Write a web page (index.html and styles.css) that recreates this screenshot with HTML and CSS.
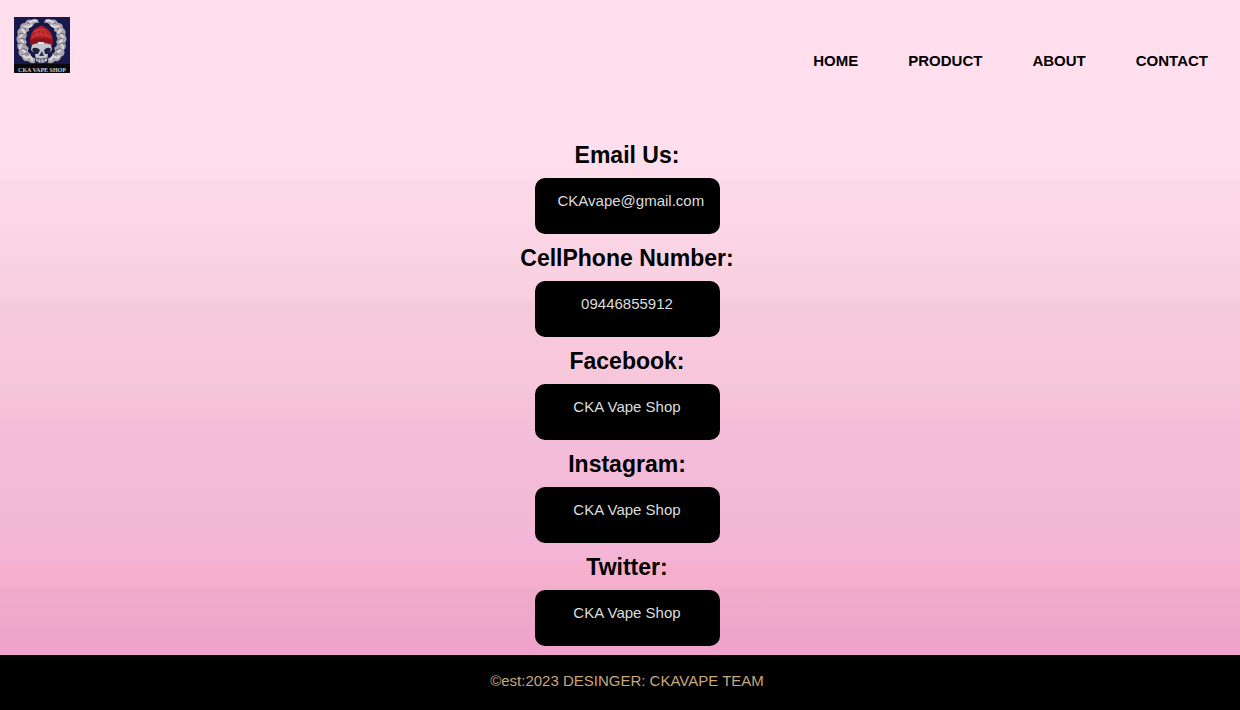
FILE: index.html
```html
<!DOCTYPE html>
<html lang="en">
<head>
<meta charset="utf-8">
<title>CKA Vape Shop - Contact</title>
<link rel="stylesheet" href="styles.css">
</head>
<body>
<header class="header">
  <a class="logo" href="#" aria-label="CKA Vape Shop">
    <svg viewBox="0 0 56 56" width="56" height="56">
      <defs>
        <g id="smoke">
          <path d="M24 3Q21 1 18 3Q13 1 11 6Q6 6 6 11Q2 14 4 18Q1 22 4 26Q2 30 5 33Q3 38 8 40Q9 45 14 44Q18 48 22 45L21 41Q16 41 17 37Q12 35 15 31Q10 28 13 25Q10 22 13 19Q11 15 15 14Q14 9 19 9Q20 5 25 6Z" fill="#aaa5ad"/>
          <path d="M23 4Q17 2 15 7Q20 8 15 10Q9 8 8 13Q13 15 8 18Q5 20 7 23Q11 25 7 28Q5 31 8 33Q13 34 9 38Q12 43 15 39Q19 41 18 44" fill="none" stroke="#dfd9d9" stroke-width="2"/>
          <path d="M13 6Q17 6 16 8M7 11Q10 10 12 12M5 17Q8 15 11 18M5 22Q9 20 11 23M4 27Q8 25 11 28M6 33Q9 30 13 33M8 38Q11 35 15 38" fill="none" stroke="#6d687c"/>
        </g>
      </defs>
      <rect width="56" height="56" fill="#17194e"/>
      <use href="#smoke"/>
      <use href="#smoke" transform="translate(55 0) scale(-1 1)"/>
      <path d="M16 26L20 23H36L39 26L38 34L34 39V45H21V39L17 34Z" fill="#15183a"/>
      <path d="M18 27Q27 23 37 27L38 33L34 37L33 44Q27 48 22 44L21 37L17 33Z" fill="#c3c4cf"/>
      <path d="M18 32Q22 29 26 33L24 37H20ZM30 33Q34 29 37 32L35 37H31Z" fill="#20233e"/>
      <path d="M28 34L25 39H30Z" fill="#343449"/>
      <path d="M21 41Q27 43 34 41M24 41V45M27 42V46M30 41V45" stroke="#555568" fill="none"/>
      <path d="M16 26Q16 12 25 10Q27 7 30 10Q39 13 39 27L38 28Q27 24 17 28Z" fill="#b51f26"/>
      <path d="M18 20Q27 15 37 20M20 15Q25 11 31 13M22 18L24 15M27 17V14M32 17L31 14" fill="none" stroke="#d04c45"/>
      <path d="M16 23Q27 19 39 23V27Q27 23 17 28Z" fill="#86151e"/>
      <rect x="24" y="25" width="6" height="2" fill="#d9e0ec"/>
      <rect y="47" width="56" height="9" fill="#07070c"/>
      <text class="logo-text" x="28" y="55" text-anchor="middle">CKA VAPE SHOP</text>
    </svg>
  </a>
  <nav class="nav">
    <a href="#">HOME</a>
    <a href="#">PRODUCT</a>
    <a href="#">ABOUT</a>
    <a href="#">CONTACT</a>
  </nav>
</header>
<main class="contacts">
  <h2 class="label">Email Us:</h2>
  <p class="card">CKAvape@gmail.com</p>
  <h2 class="label">CellPhone Number:</h2>
  <p class="card">09446855912</p>
  <h2 class="label">Facebook:</h2>
  <p class="card">CKA Vape Shop</p>
  <h2 class="label">Instagram:</h2>
  <p class="card">CKA Vape Shop</p>
  <h2 class="label">Twitter:</h2>
  <p class="card">CKA Vape Shop</p>
</main>
<footer class="footer">©est:2023 DESINGER: CKAVAPE TEAM</footer>
</body>
</html>
```
FILE: styles.css
```css
* {
  box-sizing: border-box;
}

body {
  margin: 0;
  min-height: 100vh;
  display: flex;
  flex-direction: column;
  font-family: "Liberation Sans", Arial, sans-serif;
  font-size: 15px;
  line-height: 18px;
  color: #000;
  background: linear-gradient(#ffdfed 0, #ffdfed 140px, #fddceb 178px, #fad8e8 182px, #fdd8e8 205px, #fad3e3 260px, #f8cfe0 298px, #f4c9dc 302px, #f9c8dd 350px, #f5c5da 390px, #f9bed7 415px, #f4bddb 425px, #f3bad7 500px, #f4b4d6 560px, #f6afcd 563px, #f5afcc 586px, #f0abca 590px, #efa2cc 655px);
}

.header {
  display: flex;
  justify-content: space-between;
  align-items: flex-start;
  padding: 17px 32px 0 14px;
  height: 131px;
}

.logo svg {
  display: block;
}

.logo-text {
  font-family: "Liberation Serif", serif;
  font-size: 6px;
  font-weight: bold;
  fill: #d0d0d4;
}

.nav {
  display: flex;
  gap: 50px;
  padding-top: 35px;
}

.nav a {
  color: #000;
  font-weight: bold;
  text-decoration: none;
}

.contacts {
  flex: 1;
  display: flex;
  flex-direction: column;
  align-items: center;
  padding: 0 0 9px 14px;
}

.label {
  margin: 0;
  padding: 10px 0 9px;
  font-size: 23px;
  line-height: 28px;
}

.card {
  margin: 0;
  width: 185px;
  min-height: 56px;
  padding: 14px 23px;
  border-radius: 10px;
  background: #000;
  color: #ddd;
  text-align: center;
}

.footer {
  padding: 17px 0 20px 14px;
  background: #000;
  color: #c8a77c;
  text-align: center;
}
```
